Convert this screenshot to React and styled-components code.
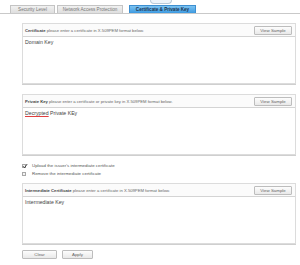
import styled, { createGlobalStyle } from "styled-components";

const GlobalStyle = createGlobalStyle`
  html, body {
    margin: 0;
    padding: 0;
    background: #ffffff;
    font-family: "Liberation Sans", Arial, sans-serif;
    color: #555;
  }
`;

const Page = styled.div`
  width: 300px;
  height: 265px;
  position: relative;
  overflow: hidden;
`;

const TabBar = styled.div`
  display: flex;
  gap: 2px;
  padding: 5px 0 0 10px;
  height: 8px;
  border-bottom: 1px solid #c9c9c9;
`;

const Tab = styled.div`
  display: flex;
  align-items: center;
  justify-content: center;
  width: ${(p) => p.$w}px;
  height: 8px;
  box-sizing: border-box;
  margin-left: ${(p) => p.$gap || 0}px;
  font-size: 4.6px;
  border: 1px solid ${(p) => (p.$active ? "#3d8fd0" : "#c4c4c4")};
  border-bottom: none;
  background: ${(p) =>
    p.$active
      ? "linear-gradient(#7cc3f2, #3d9ae0)"
      : "linear-gradient(#f1f1f1, #dedede)"};
  color: ${(p) => (p.$active ? "#1d3550" : "#777")};
  font-weight: ${(p) => (p.$active ? "bold" : "normal")};
`;

const Bump = styled.div`
  position: absolute;
  left: 150px;
  top: 0;
  width: 20px;
  height: 3px;
  border: 1px solid #b9c9d8;
  border-top: none;
  border-radius: 0 0 5px 5px;
  background: #eef4fa;
`;

const Content = styled.div`
  padding: 9px 4px 0 22px;
  display: flex;
  flex-direction: column;
`;

const Panel = styled.div`
  border: 1px solid #dcdcdc;
  box-shadow: 0 1px 0 #cfcfcf;
  background: #fff;
  margin-bottom: ${(p) => p.$mb || 0}px;
`;

const PanelHead = styled.div`
  display: flex;
  align-items: center;
  justify-content: space-between;
  height: 12px;
  padding: 0 3px 0 2px;
  background: #fbfbfb;
  border-bottom: 1px solid #d4d4d4;
  font-size: 4.2px;
  color: #666;

  b {
    color: #444;
    font-weight: bold;
  }
`;

const SmallButton = styled.div`
  display: flex;
  align-items: center;
  justify-content: center;
  width: ${(p) => p.$w || 38}px;
  height: 9px;
  box-sizing: border-box;
  border: 1px solid #bdbdbd;
  border-radius: 1px;
  background: linear-gradient(#fdfdfd, #e9e9e9);
  font-size: 4.4px;
  color: #666;
`;

const TextBox = styled.div`
  height: 46px;
  padding: 2px 2px;
  font-size: 5.2px;
  color: #444;
  box-sizing: border-box;
`;

const Squiggle = styled.span`
  text-decoration: underline solid #e04040;
  text-decoration-thickness: 0.6px;
  text-underline-offset: 0.6px;
`;

const CheckList = styled.div`
  display: flex;
  flex-direction: column;
  gap: 3px;
  padding-top: 8px;
  margin-bottom: 7px;
`;

const CheckRow = styled.div`
  display: flex;
  align-items: center;
  gap: 6px;
  height: 5px;
  font-size: 4.4px;
  color: #555;
`;

const Box = styled.span`
  position: relative;
  width: 4px;
  height: 4px;
  box-sizing: border-box;
  border: 1px solid #a8a8a8;
  background: #f4f4f4;
`;

const Tick = styled.svg`
  position: absolute;
  left: -1px;
  top: -2px;
  width: 6px;
  height: 6px;
`;

const Actions = styled.div`
  display: flex;
  gap: 5px;
  padding-top: 6px;
`;

function CertPanel({ label, text, children, mb }) {
  return (
    <Panel $mb={mb}>
      <PanelHead>
        <span>
          <b>{label}</b> {text}
        </span>
        <SmallButton>View Sample</SmallButton>
      </PanelHead>
      <TextBox>{children}</TextBox>
    </Panel>
  );
}

function Check({ checked, children }) {
  return (
    <CheckRow>
      <Box>
        {checked && (
          <Tick viewBox="0 0 6 6">
            <path d="M1 3.2 L2.5 4.8 L5.2 1" fill="none" stroke="#333" strokeWidth="0.9" />
          </Tick>
        )}
      </Box>
      <span>{children}</span>
    </CheckRow>
  );
}

export default function App() {
  return (
    <Page>
      <GlobalStyle />
      <Bump />
      <TabBar>
        <Tab $w={45}>Security Level</Tab>
        <Tab $w={66}>Network Access Protection</Tab>
        <Tab $w={67} $active $gap={4}>
          Certificate &amp; Private Key
        </Tab>
      </TabBar>
      <Content>
        <CertPanel
          mb={10}
          label="Certificate"
          text="please enter a certificate in X.509PEM format below."
        >
          Domain Key
        </CertPanel>
        <CertPanel
          label="Private Key"
          text="please enter a certificate or private key in X.509PEM format below."
        >
          <Squiggle>Decrypted</Squiggle> Private KEy
        </CertPanel>
        <CheckList>
          <Check checked>Upload the issuer's intermediate certificate</Check>
          <Check>Remove the intermediate certificate</Check>
        </CheckList>
        <CertPanel
          label="Intermediate Certificate"
          text="please enter a certificate in X.509PEM format below."
        >
          Intermediate Key
        </CertPanel>
        <Actions>
          <SmallButton $w={35}>Clear</SmallButton>
          <SmallButton $w={31}>Apply</SmallButton>
        </Actions>
      </Content>
    </Page>
  );
}
